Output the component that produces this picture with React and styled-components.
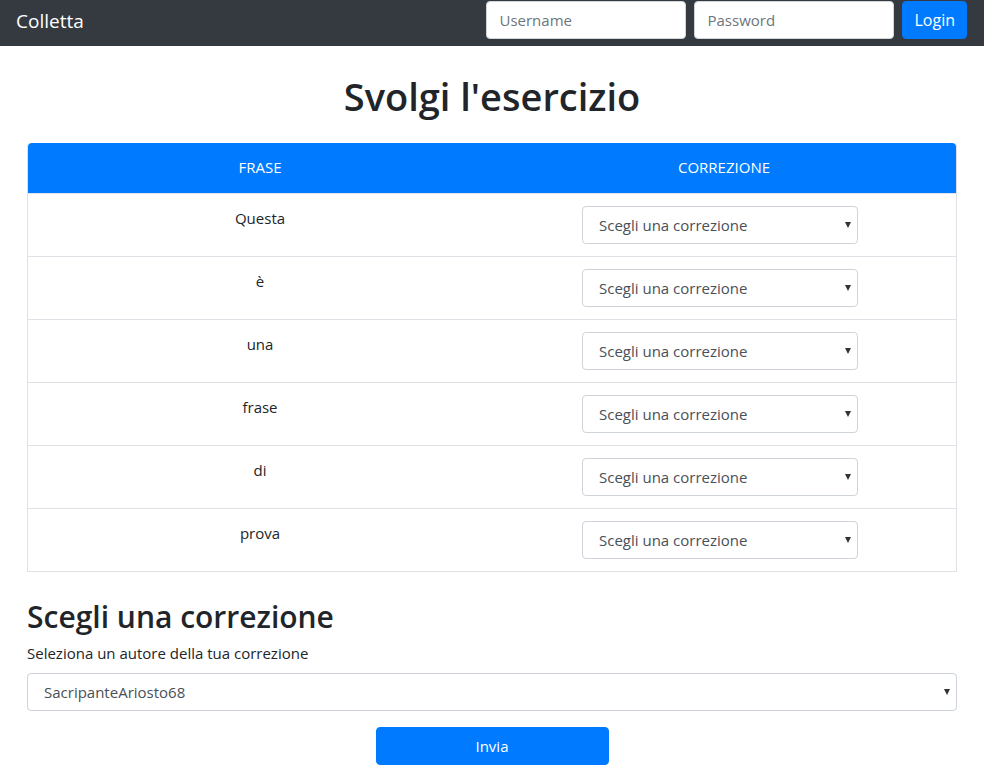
import React from "react";
import styled, { createGlobalStyle } from "styled-components";

const Global = createGlobalStyle`
  html, body { margin: 0; padding: 0; background: #fff; }
  body {
    font-family: "Open Sans", "Noto Sans", sans-serif;
    color: #212529;
    font-size: 16px;
    line-height: 1.5;
  }
  * { box-sizing: border-box; }
`;

const Navbar = styled.nav`
  height: 46px;
  background: #343a40;
  display: flex;
  align-items: center;
  justify-content: space-between;
  padding: 0 17px 0 16px;
`;

const Brand = styled.div`
  color: #fff;
  font-size: 19px;
  line-height: 1;
  margin-top: -4px;
`;

const LoginForm = styled.form`
  display: flex;
  gap: 8px;
  align-items: center;
  margin-top: -7px;
`;

const NavInput = styled.input`
  width: 200px;
  height: 38px;
  border: 1px solid #ced4da;
  border-radius: 4px;
  padding: 6px 12px;
  font: inherit;
  font-size: 15px;
  color: #495057;
  background: #fff;
  &::placeholder { color: #6c757d; }
`;

const Button = styled.button`
  background: #007bff;
  color: #fff;
  border: 1px solid #007bff;
  border-radius: 4px;
  height: 38px;
  font: inherit;
  font-size: ${(p) => p.$size || "15px"};
  padding: 0 11px;
  width: ${(p) => p.$width || "auto"};
  cursor: pointer;
`;

const Container = styled.main`
  width: 930px;
  margin: 0 auto;
  display: flex;
  flex-direction: column;
`;

const Title = styled.h1`
  margin: 28px 0 23px;
  text-align: center;
  font-size: 38px;
  font-weight: 600;
  line-height: 1.2;
`;

const Table = styled.table`
  width: 100%;
  border-collapse: separate;
  border-spacing: 0;
  border: 1px solid #dee2e6;
  border-top: none;
  border-radius: 4px 4px 0 0;
`;

const HeadCell = styled.th`
  background: #007bff;
  color: #fff;
  font-weight: 400;
  font-size: 15px;
  height: 50px;
  padding: 12px;
  width: 50%;
  text-align: center;
  vertical-align: middle;
  &:first-child { border-top-left-radius: 4px; }
  &:last-child { border-top-right-radius: 4px; }
`;

const Cell = styled.td`
  padding: 12px;
  text-align: center;
  vertical-align: top;
  border-top: 1px solid #dee2e6;
  font-size: 15px;
  line-height: 24px;
`;

const SelectWrap = styled.div`
  position: relative;
  width: ${(p) => p.$width || "276px"};
  margin: ${(p) => (p.$center ? "0 auto 0 78px" : "0")};
`;

const Select = styled.select`
  appearance: none;
  width: 100%;
  height: 38px;
  border: 1px solid #ced4da;
  border-radius: 4px;
  background: #fff;
  color: #495057;
  font: inherit;
  font-size: 15px;
  padding: 0 28px 0 16px;
  display: block;
`;

const Caret = styled.span`
  position: absolute;
  right: 7px;
  top: 50%;
  transform: translateY(-50%);
  width: 0;
  height: 0;
  border-left: 3px solid transparent;
  border-right: 3px solid transparent;
  border-top: 6px solid #333;
  pointer-events: none;
`;

const SubTitle = styled.h2`
  margin: 27px 0 7px;
  font-size: 30px;
  font-weight: 600;
  line-height: 1.2;
`;

const Label = styled.label`
  display: block;
  font-size: 15px;
  margin-bottom: 9px;
`;

const Actions = styled.div`
  display: flex;
  justify-content: center;
  margin-top: 16px;
  padding-bottom: 20px;
`;

const words = ["Questa", "è", "una", "frase", "di", "prova"];

export default function App() {
  return (
    <>
      <Global />
      <Navbar>
        <Brand>Colletta</Brand>
        <LoginForm onSubmit={(e) => e.preventDefault()}>
          <NavInput placeholder="Username" />
          <NavInput type="password" placeholder="Password" />
          <Button $size="16px">Login</Button>
        </LoginForm>
      </Navbar>
      <Container>
        <Title>Svolgi l'esercizio</Title>
        <Table>
          <thead>
            <tr>
              <HeadCell>FRASE</HeadCell>
              <HeadCell>CORREZIONE</HeadCell>
            </tr>
          </thead>
          <tbody>
            {words.map((w) => (
              <tr key={w}>
                <Cell>{w}</Cell>
                <Cell>
                  <SelectWrap $center>
                    <Select defaultValue="">
                      <option value="">Scegli una correzione</option>
                    </Select>
                    <Caret />
                  </SelectWrap>
                </Cell>
              </tr>
            ))}
          </tbody>
        </Table>
        <SubTitle>Scegli una correzione</SubTitle>
        <Label>Seleziona un autore della tua correzione</Label>
        <SelectWrap $width="100%">
          <Select defaultValue="s">
            <option value="s">SacripanteAriosto68</option>
          </Select>
          <Caret />
        </SelectWrap>
        <Actions>
          <Button $width="233px">Invia</Button>
        </Actions>
      </Container>
    </>
  );
}
